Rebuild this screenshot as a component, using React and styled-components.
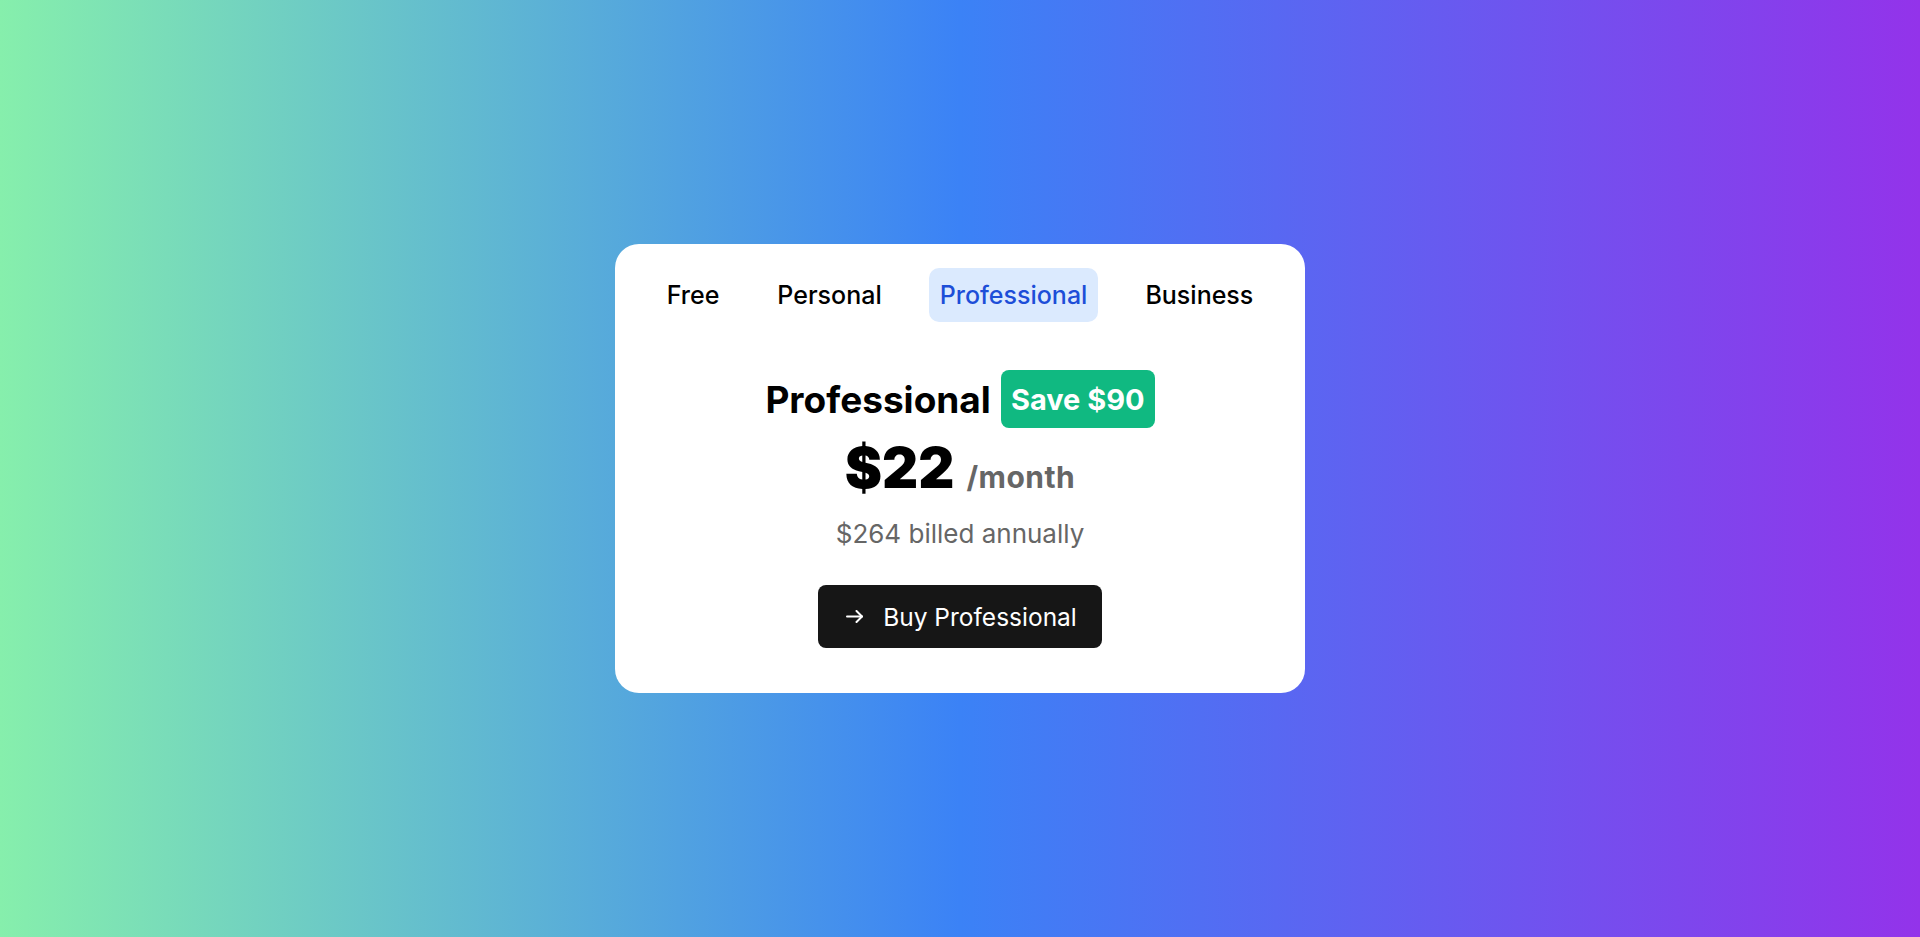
import React, { useState } from 'react';
import styled, { createGlobalStyle } from 'styled-components';

const GlobalStyle = createGlobalStyle`
  * { box-sizing: border-box; }
  body {
    margin: 0;
    font-family: 'Inter', 'Open Sans', sans-serif;
  }
`;

const plans = [
    { id: 'free', label: 'Free', monthly: 0, yearly: 0, save: 0 },
    { id: 'personal', label: 'Personal', monthly: 9, yearly: 108, save: 36 },
    { id: 'professional', label: 'Professional', monthly: 22, yearly: 264, save: 90 },
    { id: 'business', label: 'Business', monthly: 49, yearly: 588, save: 180 },
];

const ArrowIcon = () => (
    <svg width="17" height="13" viewBox="0 0 17 13" fill="none" stroke="currentColor"
         strokeWidth="2" strokeLinecap="round" strokeLinejoin="round">
        <path d="M1 6.5h15" />
        <path d="M10.5 1l5.5 5.5-5.5 5.5" />
    </svg>
);

export default function App() {
    const [active, setActive] = useState('professional');
    const plan = plans.find(p => p.id === active);

    return (
        <Page>
            <GlobalStyle />
            <Card>
                <Tabs>
                    {plans.map(p => (
                        <Tab key={p.id} $active={p.id === active} onClick={() => setActive(p.id)}>
                            {p.label}
                        </Tab>
                    ))}
                </Tabs>

                <Heading>
                    <Title>{plan.label}</Title>
                    <Badge>Save ${plan.save}</Badge>
                </Heading>

                <Price>
                    <Amount>${plan.monthly}</Amount>
                    <Period>/month</Period>
                </Price>

                <Billed>${plan.yearly} billed annually</Billed>

                <BuyButton>
                    <ArrowIcon />
                    Buy {plan.label}
                </BuyButton>
            </Card>
        </Page>
    );
}

const Page = styled.main`
  min-height: 100vh;
  display: flex;
  align-items: center;
  justify-content: center;
  background: linear-gradient(to right, #86efac, #3b82f6, #9333ea);
`;

const Card = styled.section`
  width: 690px;
  background: #fff;
  border-radius: 24px;
  padding: 24px 24px 45px;
  display: flex;
  flex-direction: column;
  align-items: center;
`;

const Tabs = styled.nav`
  display: flex;
  justify-content: center;
  gap: 36px;
`;

const Tab = styled.button`
  border: none;
  font-family: inherit;
  font-size: 25px;
  font-weight: 500;
  line-height: 30px;
  padding: 12px 11px;
  border-radius: 10px;
  cursor: pointer;
  background: ${p => (p.$active ? '#dbeafe' : 'transparent')};
  color: ${p => (p.$active ? '#1d4ed8' : '#000')};
`;

const Heading = styled.div`
  display: flex;
  align-items: center;
  gap: 10px;
  margin-top: 48px;
`;

const Title = styled.h2`
  margin: 0;
  font-size: 37px;
  font-weight: 700;
  color: #000;
`;

const Badge = styled.span`
  display: inline-flex;
  align-items: center;
  height: 58px;
  padding: 0 10px;
  border-radius: 8px;
  background: #10b981;
  color: #fff;
  font-size: 29px;
  font-weight: 700;
`;

const Price = styled.div`
  display: flex;
  align-items: baseline;
  gap: 12px;
  margin-top: 8px;
`;

const Amount = styled.span`
  font-size: 56px;
  font-weight: 900;
  line-height: 64px;
  color: #000;
`;

const Period = styled.span`
  font-size: 30px;
  font-weight: 700;
  letter-spacing: 0.5px;
  color: #666;
`;

const Billed = styled.p`
  margin: 17px 0 0;
  font-size: 26px;
  line-height: 34px;
  color: #666;
`;

const BuyButton = styled.button`
  display: flex;
  align-items: center;
  gap: 20px;
  height: 63px;
  margin-top: 34px;
  padding: 0 25px 0 28px;
  border: none;
  border-radius: 8px;
  background: #161616;
  color: #fff;
  font-family: inherit;
  font-size: 24.5px;
  font-weight: 400;
  cursor: pointer;
`;
